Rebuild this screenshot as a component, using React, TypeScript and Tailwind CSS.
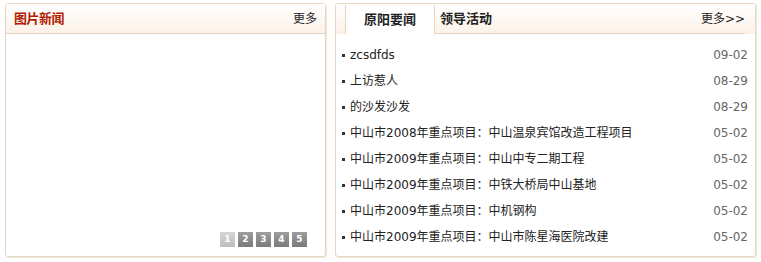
import React from 'react';

const news = [
    { title: 'zcsdfds', date: '09-02' },
    { title: '上访惹人', date: '08-29' },
    { title: '的沙发沙发', date: '08-29' },
    { title: '中山市2008年重点项目：中山温泉宾馆改造工程项目', date: '05-02' },
    { title: '中山市2009年重点项目：中山中专二期工程', date: '05-02' },
    { title: '中山市2009年重点项目：中铁大桥局中山基地', date: '05-02' },
    { title: '中山市2009年重点项目：中机钢构', date: '05-02' },
    { title: '中山市2009年重点项目：中山市陈星海医院改建', date: '05-02' },
];

const font = "font-['DejaVu_Sans','Noto_Sans_CJK_SC',sans-serif]";

export default function App() {
    return (
        <div className={`w-[761px] h-[262px] bg-white flex gap-[9px] pl-[5px] pt-[3px] ${font}`}>
            <div className="w-[321px] h-[254px] border border-[#e6d6c0] rounded-[3px] flex flex-col shadow-[1px_1px_1px_#efe7da]">
                <div className="h-[30px] shrink-0 border-b border-[#e6d6c0] bg-gradient-to-b from-white to-[#fcf1e8] flex items-center justify-between px-[8px]">
                    <span className="text-[13px] font-bold text-[#b31d00] tracking-[-0.5px]">图片新闻</span>
                    <span className="text-[12px] text-[#222]">更多</span>
                </div>
                <div className="flex-1 flex items-end justify-end pr-[18px] pb-[9px]">
                    <div className="flex gap-[3px]">
                        {['1', '2', '3', '4', '5'].map((n, i) => (
                            <div
                                key={n}
                                className={`w-[15px] h-[15px] flex items-center justify-center text-[9px] font-bold text-white ${
                                    i === 0
                                        ? 'bg-gradient-to-b from-[#d6d6d6] to-[#bdbdbd]'
                                        : 'bg-gradient-to-b from-[#9e9e9e] to-[#7a7a7a]'
                                }`}
                            >
                                {n}
                            </div>
                        ))}
                    </div>
                </div>
            </div>
            <div className="w-[421px] h-[254px] border border-[#e6d6c0] rounded-[3px] flex flex-col shadow-[1px_1px_1px_#efe7da]">
                <div className="h-[30px] shrink-0 bg-gradient-to-b from-white to-[#fcf1e8] flex items-stretch pl-[9px] pr-[10px]">
                    <div className="w-[90px] mt-[1px] bg-white border-l border-r border-[#e6d6c0] flex items-center justify-center text-[13px] font-bold text-[#222]">
                        原阳要闻
                    </div>
                    <div className="flex-1 border-b border-[#e6d6c0] flex items-center justify-between pl-[5px]">
                        <span className="text-[13px] font-bold text-[#222]">领导活动</span>
                        <span className="text-[12px] text-[#222]">更多&gt;&gt;</span>
                    </div>
                </div>
                <ul className="flex flex-col pt-[8px] pl-[6px] pr-[7px]">
                    {news.map((item, i) => (
                        <li key={i} className="h-[26px] flex items-center justify-between text-[12px]">
                            <span className="flex items-center text-[#222]">
                                <span className="w-[3px] h-[3px] bg-[#333] mr-[5px]" />
                                {item.title}
                            </span>
                            <span className="text-[#666]">{item.date}</span>
                        </li>
                    ))}
                </ul>
            </div>
        </div>
    );
}
